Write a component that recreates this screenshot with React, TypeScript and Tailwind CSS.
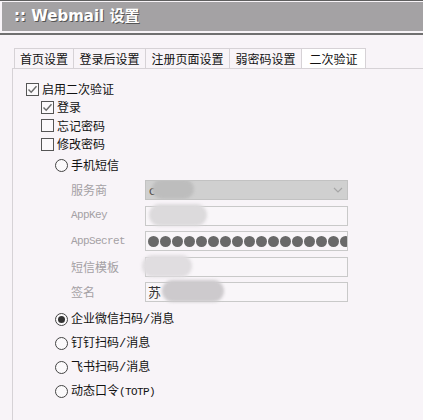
import React from 'react';

const tabs = ['首页设置', '登录后设置', '注册页面设置', '弱密码设置', '二次验证'];

function Checkbox({ checked }: { checked?: boolean }) {
  return (
    <span className="w-[13px] h-[13px] border border-[#555] bg-[#fbf9fb] flex items-center justify-center shrink-0">
      {checked && (
        <svg width="11" height="11" viewBox="0 0 11 11">
          <path d="M1.5 5.5 L4.2 8.3 L9.5 2.2" fill="none" stroke="#6a6a6a" strokeWidth="1.4" />
        </svg>
      )}
    </span>
  );
}

function Radio({ checked }: { checked?: boolean }) {
  return (
    <span className="w-[13px] h-[13px] rounded-full border border-[#444] bg-[#fbf9fb] flex items-center justify-center shrink-0">
      {checked && <span className="w-[7px] h-[7px] rounded-full bg-[#333]" />}
    </span>
  );
}

function Blob({ className }: { className: string }) {
  return <span className={`absolute rounded-full blur-[1.5px] ${className}`} />;
}

export default function App() {
  const mono = { fontFamily: '"Liberation Mono", monospace' };

  return (
    <div
      className="min-h-[420px] bg-[#f8f4f8] text-[12px] text-[#111] overflow-hidden"
      style={{ fontFamily: '"Noto Sans CJK SC", "Noto Sans", sans-serif' }}
    >
      {/* Header */}
      <div className="border-t border-[#5f5f5f]">
        <div className="mt-px ml-[2px] h-[29px] bg-[#a4a2a4] flex items-center pl-[12px]">
          <span
            className="text-white font-bold text-[15px] [text-shadow:1px_1px_0_#555]"
            style={{ fontFamily: '"DejaVu Sans", "Noto Sans CJK SC", sans-serif' }}
          >
            :: Webmail 设置
          </span>
        </div>
        <div className="h-[2px]" />
        <div className="h-[2px] bg-[#707070]" />
      </div>

      {/* Tabs */}
      <div className="mt-[13px] ml-[14px] flex h-[20px]">
        {tabs.map((t, i) => (
          <div
            key={t}
            className={`h-[20px] border-t border-r border-[#d6d2d6] flex items-center leading-none ${
              i === 0 ? 'border-l px-[5px]' : 'px-[5.5px]'
            } ${i === tabs.length - 1 ? 'bg-white px-[7.5px]' : ''}`}
          >
            {t}
          </div>
        ))}
      </div>

      {/* Panel */}
      <div className="ml-[12px] border-t border-l border-[#d6d2d6] pt-[11px] pl-[13px] h-[360px]">
        <div className="flex flex-col">
          <label className="flex items-center gap-[3px] h-[18px]">
            <Checkbox checked />
            <span>启用二次验证</span>
          </label>
          <div className="pl-[15px] flex flex-col">
            <label className="flex items-center gap-[3px] h-[18px]">
              <Checkbox checked />
              <span>登录</span>
            </label>
            <label className="flex items-center gap-[3px] h-[19px]">
              <Checkbox />
              <span>忘记密码</span>
            </label>
            <label className="flex items-center gap-[3px] h-[18px]">
              <Checkbox />
              <span>修改密码</span>
            </label>
          </div>

          <div className="pl-[29px] flex flex-col">
            <label className="flex items-center gap-[3px] h-[18px] mt-[3px]">
              <Radio />
              <span>手机短信</span>
            </label>

            {/* SMS form */}
            <div className="pl-[16px] mt-[6px] grid grid-cols-[74px_203px] gap-y-[5.5px] items-center">
              <span className="text-[#a4a0a4]">服务商</span>
              <div className="relative h-[20px] bg-[#d0d0d0] border border-[#c2c2c2] flex items-center justify-between px-[3px] overflow-hidden">
                <span className="text-[#444]">c</span>
                <Blob className="left-[6px] top-[-2px] w-[42px] h-[20px] bg-[#bdbdbd]" />
                <svg width="10" height="6" viewBox="0 0 10 6" className="mr-[1px]">
                  <path d="M1 1 L5 5 L9 1" fill="none" stroke="#a6a6a6" strokeWidth="1.2" />
                </svg>
              </div>

              <span className="text-[#a4a0a4] text-[11px] tracking-[-0.6px]" style={mono}>AppKey</span>
              <div className="relative h-[20px] bg-[#f9f6f9] border border-[#c9c9c9]">
                <Blob className="left-[3px] top-[-3px] w-[58px] h-[22px] bg-[#dcdadc]" />
              </div>

              <span className="text-[#a4a0a4] text-[11px] tracking-[-0.6px]" style={mono}>AppSecret</span>
              <div className="h-[20px] bg-[#f9f6f9] border border-[#c9c9c9] flex items-center gap-px pl-[2px] overflow-hidden">
                {Array.from({ length: 18 }).map((_, i) => (
                  <span key={i} className="w-[11px] h-[11px] rounded-full bg-[#696969] shrink-0" />
                ))}
              </div>

              <span className="text-[#a4a0a4]">短信模板</span>
              <div className="relative h-[20px] bg-[#f9f6f9] border border-[#c9c9c9]">
                <Blob className="left-[-4px] top-[-3px] w-[50px] h-[22px] bg-[#e0dde0]" />
              </div>

              <span className="text-[#a4a0a4]">签名</span>
              <div className="relative h-[20px] bg-[#f9f6f9] border border-[#c9c9c9] flex items-center pl-[2px] overflow-visible">
                <span className="text-[13px] text-[#333]">苏</span>
                <Blob className="left-[16px] top-[-3px] w-[62px] h-[22px] bg-[#cdcacd]" />
              </div>
            </div>

            {/* Other methods */}
            <div className="mt-[5px] flex flex-col">
              {[
                { t: <>企业微信扫码<span style={mono}>/</span>消息</>, c: true },
                { t: <>钉钉扫码<span style={mono}>/</span>消息</> },
                { t: <>飞书扫码<span style={mono}>/</span>消息</> },
                { t: <>动态口令<span className="text-[11px] tracking-[-0.6px]" style={mono}>(TOTP)</span></> },
              ].map((r, i) => (
                <label key={i} className="flex items-center gap-[3px] h-[24px]">
                  <Radio checked={r.c} />
                  <span>{r.t}</span>
                </label>
              ))}
            </div>
          </div>
        </div>
      </div>
    </div>
  );
}
